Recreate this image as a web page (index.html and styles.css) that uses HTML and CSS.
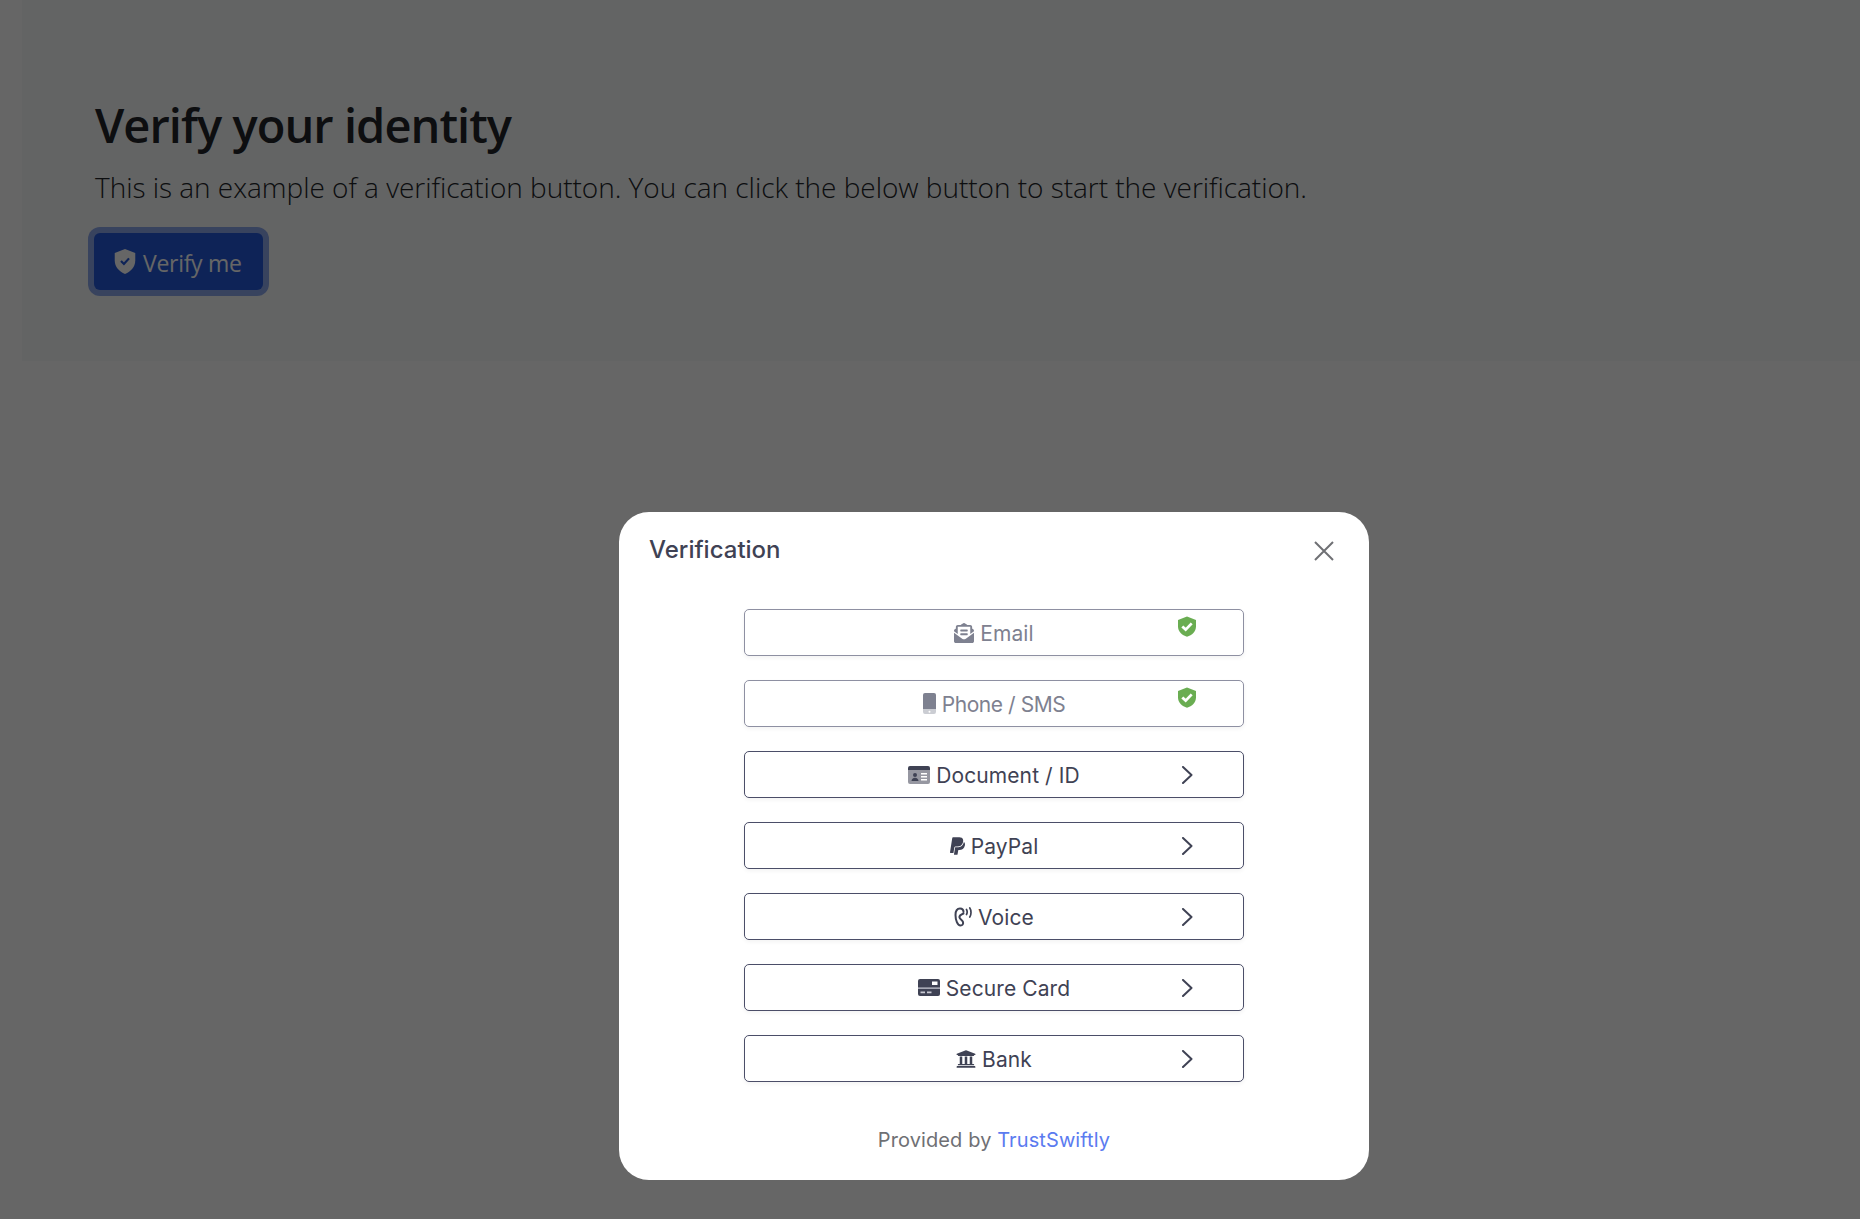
FILE: index.html
```html
<!DOCTYPE html>
<html>
<head lang="en">
    <meta charset="UTF-8">
    <title>Verify your identity</title>
    <link rel="stylesheet" href="styles.css">
</head>
<body>
<svg class="defs" width="0" height="0">
    <symbol id="ok" viewBox="0 0 20 21">
        <path fill="#6aad52" d="M10 .5 19 4v6.500c0 5-4 8.800-9 10.200C5 19.300 1 15.500 1 10.500V4z"/>
        <path fill="none" stroke="#fff" stroke-width="2.800" d="M5.300 10.400 8.700 13.600 14.700 7.400"/>
    </symbol>
    <symbol id="arrow" viewBox="0 0 12 18">
        <path fill="none" stroke="currentColor" stroke-width="2" stroke-linecap="round" stroke-linejoin="round" d="M2 1 10.500 9 2 17"/>
    </symbol>
</svg>
<div id="page">
    <div id="hero">
        <h1>Verify your identity</h1>
        <p>This is an example of a verification button. You can click the below button to start the verification.</p>
        <button id="verify">
            <svg viewBox="0 0 24 28" width="22" height="25">
                <path fill="#fff" d="M12 0 23.500 4.500V13c0 7-5 12.500-11.500 15C5.500 25.500.5 20 .5 13V4.500z"/>
                <path fill="none" stroke="#2358da" stroke-width="2.500" d="M7.500 13.500 10.800 16.800 16.500 10.500"/>
            </svg>
            <span class="verify-text">Verify me</span>
        </button>
    </div>
</div>
<div id="overlay">
    <div id="modal">
        <div class="modal-head">
            <h2>Verification</h2>
            <svg class="close" viewBox="0 0 20 20" width="20" height="20">
                <path fill="none" stroke="#6f7074" stroke-width="2" d="M1 1 19 19M19 1 1 19"/>
            </svg>
        </div>
        <ul id="methods">
            <li class="method done">
                <span class="label">
                    <svg viewBox="0 0 512 512" width="20" height="20"><path fill="currentColor" d="M176 216h160c8.840 0 16-7.160 16-16v-16c0-8.840-7.160-16-16-16H176c-8.840 0-16 7.160-16 16v16c0 8.840 7.160 16 16 16zm-16 80c0 8.840 7.160 16 16 16h160c8.840 0 16-7.160 16-16v-16c0-8.840-7.160-16-16-16H176c-8.840 0-16 7.160-16 16v16zm96 121.130c-16.420 0-32.840-5.060-46.860-15.190L0 250.860V464c0 26.510 21.490 48 48 48h416c26.510 0 48-21.490 48-48V250.860L302.860 401.940c-14.020 10.120-30.440 15.190-46.860 15.190zm237.610-254.180c-8.850-6.940-17.240-13.470-29.610-22.810V96c0-26.510-21.490-48-48-48h-77.550c-3.040-2.200-5.870-4.260-9.040-6.560C312.600 29.170 279.200-.35 256 0c-23.200-.35-56.590 29.170-73.410 41.440-3.170 2.300-6 4.360-9.040 6.560H96c-26.510 0-48 21.490-48 48v44.140c-12.370 9.330-20.760 15.870-29.610 22.810A47.995 47.995 0 0 0 0 200.720v10.650l96 69.350V96h320v184.720l96-69.350v-10.650c0-14.740-6.780-28.670-18.390-37.770z"/></svg>
                    Email
                </span>
                <svg class="state" width="20" height="21"><use href="#ok"/></svg>
            </li>
            <li class="method done">
                <span class="label phone">
                    <svg viewBox="0 0 13 21" width="13" height="21"><path fill="currentColor" d="M2 0h9a2 2 0 0 1 2 2v14H0V2a2 2 0 0 1 2-2z"/><path fill="currentColor" opacity=".4" fill-rule="evenodd" d="M0 16h13v3a2 2 0 0 1-2 2H2a2 2 0 0 1-2-2zm6.500 1.700a1 1 0 1 0 0 2 1 1 0 0 0 0-2z"/></svg>
                    Phone / SMS
                </span>
                <svg class="state" width="20" height="21"><use href="#ok"/></svg>
            </li>
            <li class="method">
                <span class="label">
                    <svg viewBox="0 0 22 18" width="22" height="18"><path fill="currentColor" opacity=".55" d="M0 3h22v13a2 2 0 0 1-2 2H2a2 2 0 0 1-2-2z"/><path fill="currentColor" d="M2 0h18a2 2 0 0 1 2 2v2H0V2a2 2 0 0 1 2-2zm5 7a2 2 0 1 1 0 4 2 2 0 0 1 0-4zM3.500 15c0-2 1.500-3.300 3.500-3.300s3.500 1.300 3.500 3.300z"/><path fill="#fff" d="M13 7h6v1.500h-6zm0 3h6v1.500h-6zm0 3h6v1.500h-6z"/></svg>
                    Document / ID
                </span>
                <svg class="state" width="12" height="18"><use href="#arrow"/></svg>
            </li>
            <li class="method">
                <span class="label">
                    <svg viewBox="0 0 384 512" width="15" height="20"><path fill="currentColor" d="M111.400 295.900c-3.500 19.200-17.400 108.700-21.500 134-.3 1.800-1 2.500-3 2.500H12.300c-7.600 0-13.100-6.600-12.100-13.900L58.800 46.600c1.500-9.600 10.100-16.900 20-16.900 152.300 0 165.100-3.700 204 11.400 60.100 23.300 65.600 79.500 44 140.300-21.500 62.600-72.500 89.500-140.100 90.300-43.400.7-69.500-7-75.300 24.200zM357.100 152c-1.800-1.300-2.500-1.800-3 1.300-2 11.400-5.100 22.500-8.800 33.600-39.900 113.800-150.500 103.900-204.500 103.900-6.100 0-10.100 3.300-10.900 9.400-22.600 140.400-27.100 169.700-27.100 169.700-1 7.100 3.500 12.900 10.600 12.900h63.500c8.600 0 15.700-6.300 17.400-14.900.7-5.400-1.100 6.100 14.400-91.300 4.600-22 14.300-19.700 29.300-19.700 71 0 126.400-28.800 142.900-112.300 6.500-34.800 4.600-71.400-23.800-92.600z"/></svg>
                    PayPal
                </span>
                <svg class="state" width="12" height="18"><use href="#arrow"/></svg>
            </li>
            <li class="method">
                <span class="label">
                    <svg viewBox="0 0 18 20" width="18" height="20"><path fill="none" stroke="currentColor" stroke-width="2" stroke-linecap="round" d="M9.500 5C9.500 2.500 8 1.500 6 1.500 3 1.500 1.500 4 1.500 8c0 5 2 10.500 5 10.500 2 0 3-1.500 2.500-3.500-.5-2-3-2.500-3.500-4.500S7 7.500 9.500 6.500"/><path fill="none" stroke="currentColor" stroke-width="1.700" stroke-linecap="round" d="M12.500 2.500c.8 1.500.8 3.500 0 5M15.800 1c1.600 2.300 1.600 6.700 0 9"/></svg>
                    Voice
                </span>
                <svg class="state" width="12" height="18"><use href="#arrow"/></svg>
            </li>
            <li class="method">
                <span class="label">
                    <svg viewBox="0 0 22 17" width="22" height="17"><path fill="currentColor" d="M2 0h18a2 2 0 0 1 2 2v13a2 2 0 0 1-2 2H2a2 2 0 0 1-2-2V2a2 2 0 0 1 2-2z"/><path fill="#fff" d="M14 2.500h5.500V6H14z"/><path fill="#c9cad3" d="M0 8.500h22v1.200H0zM2.500 12.500h4.500v1.800H2.500zm6.500 0h4.500v1.800H9z"/></svg>
                    Secure Card
                </span>
                <svg class="state" width="12" height="18"><use href="#arrow"/></svg>
            </li>
            <li class="method">
                <span class="label">
                    <svg viewBox="0 0 512 512" width="20" height="20"><path fill="currentColor" d="M496 128v16a8 8 0 0 1-8 8h-24v12c0 6.627-5.373 12-12 12H60c-6.627 0-12-5.373-12-12v-12H24a8 8 0 0 1-8-8v-16a8 8 0 0 1 4.941-7.392l232-88a7.996 7.996 0 0 1 6.118 0l232 88A8 8 0 0 1 496 128zm-24 304H40c-13.255 0-24 10.745-24 24v16a8 8 0 0 0 8 8h464a8 8 0 0 0 8-8v-16c0-13.255-10.745-24-24-24zM96 192v192H60c-6.627 0-12 5.373-12 12v20h416v-20c0-6.627-5.373-12-12-12h-36V192h-64v192h-64V192h-64v192h-64V192H96z"/></svg>
                    Bank
                </span>
                <svg class="state" width="12" height="18"><use href="#arrow"/></svg>
            </li>
        </ul>
        <p class="provided">Provided by <a href="#">TrustSwiftly</a></p>
    </div>
</div>
</body>
</html>
```
FILE: styles.css
```css
*{
    margin: 0;
    padding: 0;
    box-sizing: border-box;
}
ul{
    list-style: none;
}
html,body{
    height: 100%;
    overflow: hidden;
}
body{
    background: #fff;
    font-family: "Open Sans", "Noto Sans", sans-serif;
    color: #212529;
}
.defs{
    display: block;
    height: 0;
}
#page{
    padding-left: 22px;
}
#hero{
    height: 361px;
    padding: 96px 73px 0;
    background: #f8f9fa;
}
#hero h1{
    font-size: 47px;
    line-height: 58px;
    font-weight: 600;
    letter-spacing: -0.95px;
}
#hero p{
    margin-top: 12px;
    font-size: 28px;
    line-height: 42px;
    font-weight: 300;
    letter-spacing: -0.03px;
}
#verify{
    display: flex;
    align-items: center;
    gap: 7px;
    margin: 25px 0 0 -1px;
    width: 169px;
    height: 57px;
    padding: 0 20px;
    border: 0;
    border-radius: 6px;
    background: #2358da;
    color: #fff;
    font-family: inherit;
    font-size: 23px;
    letter-spacing: -0.3px;
    box-shadow: 0 0 0 6px #8da8ea;
}
.verify-text{
    margin-top: 2px;
}
#overlay{
    position: fixed;
    top: 0;
    left: 0;
    right: 0;
    bottom: 0;
    padding: 512px 0 0 619px;
    background: rgba(0,0,0,.6);
}
#modal{
    width: 750px;
    height: 668px;
    padding: 20px 30px 0;
    border-radius: 30px;
    background: #fff;
    font-family: Inter, "Noto Sans", sans-serif;
}
.modal-head{
    display: flex;
    justify-content: space-between;
    align-items: center;
    padding-right: 5px;
    height: 37px;
}
.modal-head h2{
    margin-top: -2px;
    font-size: 24px;
    font-weight: 500;
    color: #3f4254;
}
#methods{
    display: flex;
    flex-direction: column;
    gap: 24px;
    width: 500px;
    margin: 40px auto 0;
}
.method{
    display: grid;
    grid-template-columns: 1fr auto 1fr;
    align-items: center;
    height: 47px;
    padding: 0 50px;
    border: 1px solid #4b4e68;
    border-radius: 5px;
    color: #3f4254;
    box-shadow: 0 2px 4px rgba(0,0,0,.05);
}
.label{
    grid-column: 2;
    display: flex;
    align-items: center;
    gap: 6px;
    padding-top: 2px;
    font-size: 21px;
    letter-spacing: .1px;
}
.label svg{
    margin-top: -2px;
}
.phone{
    letter-spacing: -.45px;
}
.state{
    grid-column: 3;
    justify-self: end;
}
.done{
    border-color: #8e90a2;
}
.done .label{
    color: #7e8190;
}
.done .state{
    margin-top: -12px;
    margin-right: -4px;
}
.provided{
    margin-top: 46px;
    text-align: center;
    font-size: 20px;
    letter-spacing: .1px;
    color: #6f7074;
}
.provided a{
    color: #5b7bf0;
    text-decoration: none;
}
```
